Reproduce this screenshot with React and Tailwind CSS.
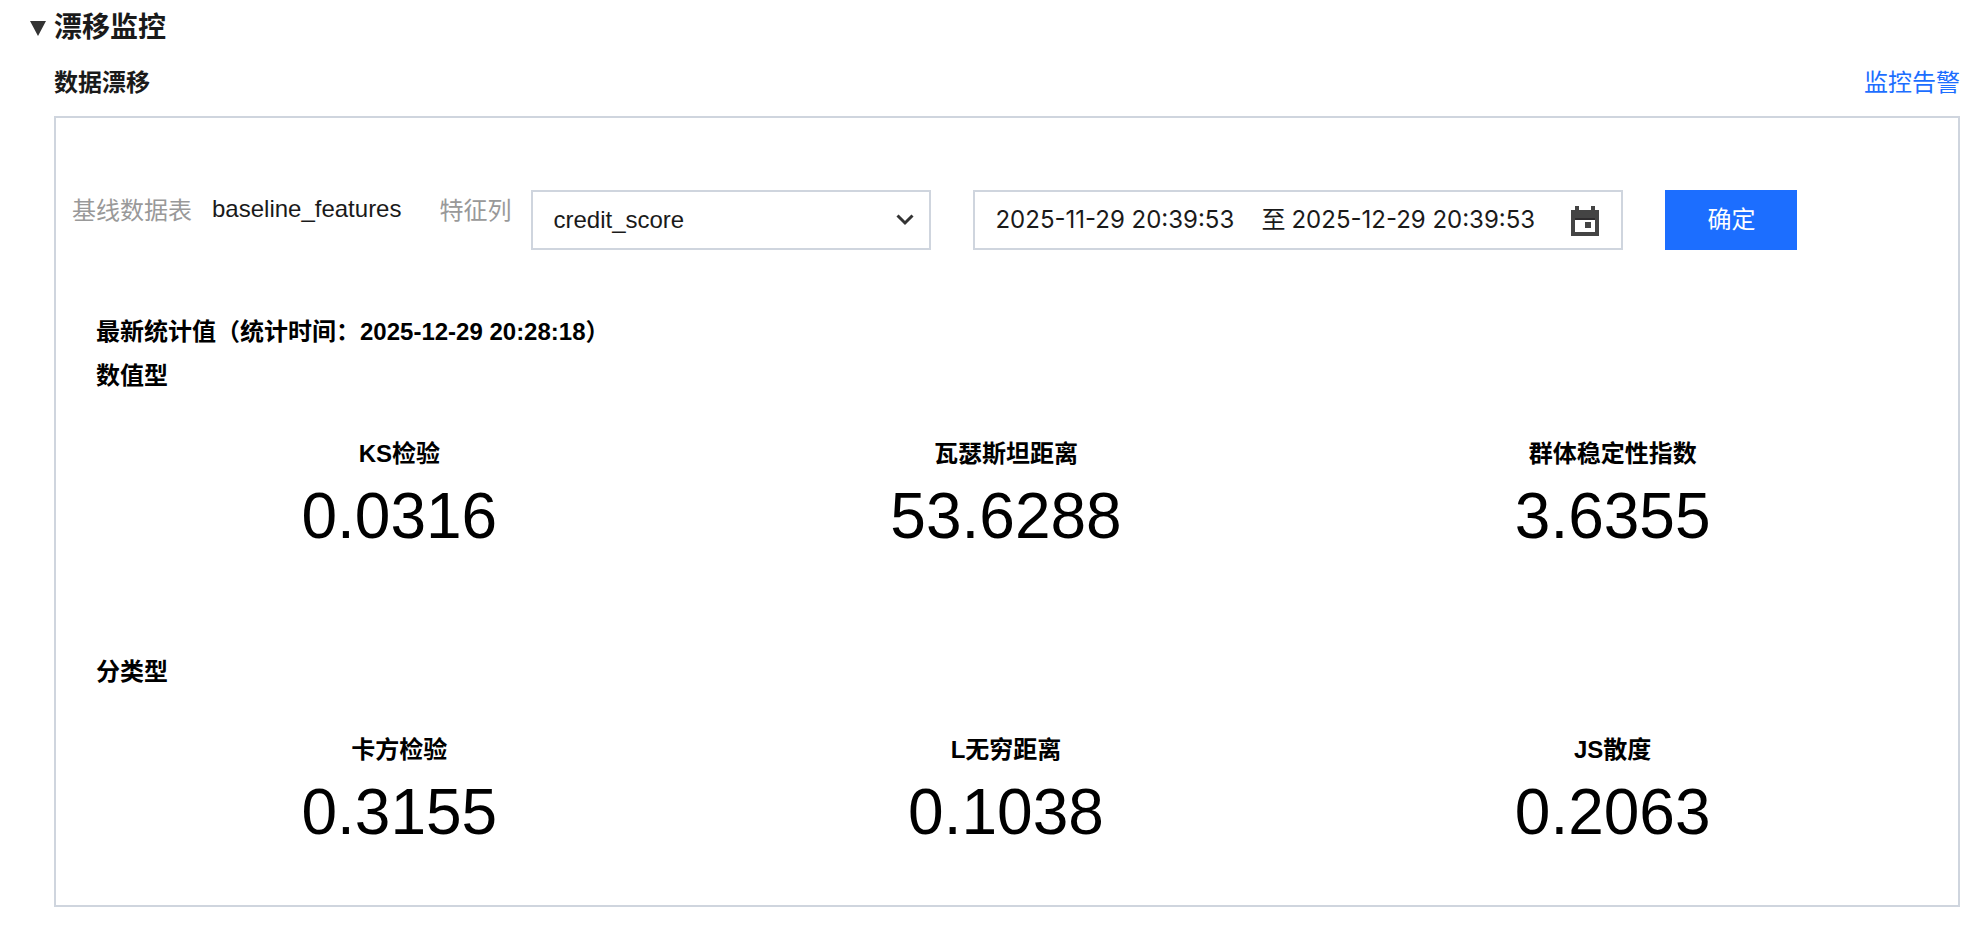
import { useState } from 'react';

const numericStats = [
  { label: 'KS检验', value: '0.0316' },
  { label: '瓦瑟斯坦距离', value: '53.6288' },
  { label: '群体稳定性指数', value: '3.6355' },
];

const categoryStats = [
  { label: '卡方检验', value: '0.3155' },
  { label: 'L无穷距离', value: '0.1038' },
  { label: 'JS散度', value: '0.2063' },
];

const StatRow = ({ title, stats }) => (
  <section>
    <h4 className="text-2xl leading-11 font-bold">{title}</h4>
    <div className="grid grid-cols-3 mt-9">
      {stats.map((s) => (
        <div key={s.label} className="text-center">
          <div className="text-2xl leading-10 font-bold">{s.label}</div>
          <div className="text-[64px] leading-[84px]">{s.value}</div>
        </div>
      ))}
    </div>
  </section>
);

const App = () => {
  const [open, setOpen] = useState(true);
  const [feature, setFeature] = useState('credit_score');
  const [start, setStart] = useState('2025-11-29 20:39:53');
  const [end, setEnd] = useState('2025-12-29 20:39:53');

  return (
    <div className="bg-white text-[#1a1a1a] px-7 pt-1.5 font-['Liberation_Sans','Noto_Sans_CJK_SC',sans-serif]">
      <button onClick={() => setOpen(!open)} className="flex items-center gap-2 text-[28px] leading-11 font-bold">
        <svg width="18" height="15" viewBox="0 0 18 15" className={open ? '' : '-rotate-90'}>
          <path d="M2 0h16L10 15z" fill="#333" />
        </svg>
        漂移监控
      </button>

      {open && (
        <div className="pl-[26px]">
          <div className="flex justify-between items-center mt-[11px] text-2xl leading-11">
            <h3 className="font-bold">数据漂移</h3>
            <a href="#alarm" className="text-[#1c6eff]">监控告警</a>
          </div>

          <div className="mt-[11px] border-2 border-[#cfd5de] pt-[72px] pb-[51px]">
            <div className="flex pl-4 text-2xl">
              <span className="text-[#999] leading-[42px]">基线数据表</span>
              <span className="ml-5 leading-[38px]">baseline_features</span>
              <label htmlFor="feature" className="ml-[38px] text-[#999] leading-[42px]">特征列</label>
              <div className="relative ml-5">
                <select
                  id="feature"
                  value={feature}
                  onChange={(e) => setFeature(e.target.value)}
                  className="appearance-none w-[400px] h-15 pl-5 border-2 border-[#cfd5de] bg-white"
                >
                  <option value="credit_score">credit_score</option>
                </select>
                <svg width="18" height="12" viewBox="0 0 18 12" className="absolute right-[17px] top-6 pointer-events-none">
                  <path d="M1.500 1.500L9 9l7.500-7.500" fill="none" stroke="#333" strokeWidth="3" />
                </svg>
              </div>

              <div className="flex items-center w-[650px] h-15 ml-[42px] pl-5 pr-[22px] border-2 border-[#cfd5de] font-[Inter,'Noto_Sans_CJK_SC',sans-serif]">
                <input aria-label="开始时间" value={start} onChange={(e) => setStart(e.target.value)} className="w-[266px]" />
                <span>至</span>
                <input aria-label="结束时间" value={end} onChange={(e) => setEnd(e.target.value)} className="w-[266px] ml-[6px]" />
                <button aria-label="选择日期" className="ml-auto">
                  <svg width="28" height="32" viewBox="0 0 28 32">
                    <path d="M4 2h4v4h12V2h4v4h4v26H0V6h4zM4 16v12h20V16z" fill="#444" fillRule="evenodd" />
                    <path d="M14 18h6v6h-6z" fill="#444" />
                    <path d="M4 14h20v2H4z" fill="#2e2c2e" />
                  </svg>
                </button>
              </div>

              <button className="w-33 h-15 ml-[42px] bg-[#1c6eff] text-white">确定</button>
            </div>

            <div className="pl-10 pr-[42px] mt-15 text-black">
              <h4 className="text-2xl leading-11 font-bold">最新统计值（统计时间：2025-12-29 20:28:18）</h4>
              <StatRow title="数值型" stats={numericStats} />
              <div className="mt-[92px]">
                <StatRow title="分类型" stats={categoryStats} />
              </div>
            </div>
          </div>
        </div>
      )}
    </div>
  );
};

export default App;
